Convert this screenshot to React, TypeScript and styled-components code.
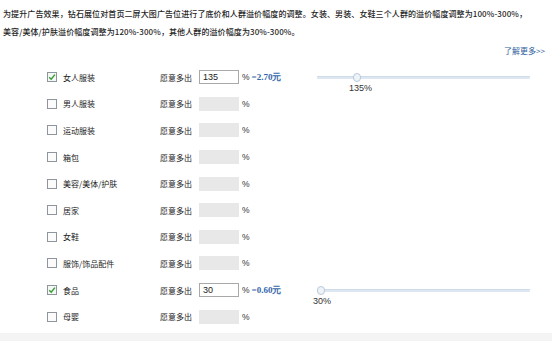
import styled, { createGlobalStyle } from 'styled-components';

const GlobalStyle = createGlobalStyle`
    html, body {
        margin: 0;
        padding: 0;
        background: #ffffff;
    }
    body {
        font-family: "Noto Sans CJK SC", "Liberation Sans", sans-serif;
        color: #333333;
    }
`;

const Page = styled.div`
    width: 552px;
    height: 341px;
    display: flex;
    flex-direction: column;
    overflow: hidden;
`;

const Intro = styled.p`
    margin: 0;
    padding: 5px 0 0 3px;
    font-size: 8px;
    line-height: 18px;
    font-weight: 500;
    letter-spacing: 0.1px;
    color: #1f1f1f;
`;

const MoreRow = styled.div`
    display: flex;
    justify-content: flex-end;
    height: 18px;
    align-items: center;
    padding-right: 7px;
    margin-bottom: 5px;
`;

const MoreLink = styled.a`
    font-size: 8px;
    color: #2f5f9e;
    text-decoration: none;
`;

const List = styled.div`
    display: flex;
    flex-direction: column;
`;

const Row = styled.div`
    display: flex;
    align-items: center;
    height: 26.6px;
    padding-left: 47px;
    font-size: 8px;
`;

const Box = styled.span<{ $checked: boolean }>`
    width: 10px;
    height: 10px;
    box-sizing: border-box;
    border: 1px solid #8e959c;
    background: ${(p) => (p.$checked ? '#f4f8f4' : '#fbfbfb')};
    display: flex;
    align-items: center;
    justify-content: center;
    margin-right: 6px;
    flex-shrink: 0;
`;

const Label = styled.span`
    width: 97px;
    white-space: nowrap;
    color: #222;
`;

const Prompt = styled.span`
    width: 39px;
    white-space: nowrap;
    color: #222;
`;

const Amount = styled.span<{ $filled: boolean }>`
    width: 40px;
    height: 14px;
    box-sizing: border-box;
    border: 1px solid ${(p) => (p.$filled ? '#a9a9a9' : '#e8e8e8')};
    background: ${(p) => (p.$filled ? '#ffffff' : '#e8e8e8')};
    font-family: "Liberation Sans", sans-serif;
    font-size: 9px;
    line-height: 12px;
    padding-left: 3px;
    color: #222;
`;

const Extra = styled.span`
    width: 78px;
    padding-left: 3px;
    box-sizing: border-box;
    white-space: nowrap;
    font-family: "Liberation Sans", sans-serif;
    font-size: 8.5px;
    color: #333;
`;

const Money = styled.span`
    color: #3567a8;
    font-family: "Liberation Serif", serif;
    font-weight: bold;
    font-size: 9px;
    margin-left: 2px;
`;

const Slider = styled.div`
    position: relative;
    width: 213px;
    height: 3px;
    background: #dce7f1;
    border-top: 1px solid #cfdbe8;
    box-sizing: border-box;
    border-radius: 1px;
`;

const Thumb = styled.span`
    position: absolute;
    top: -4px;
    width: 8px;
    height: 9px;
    box-sizing: border-box;
    border-radius: 4px;
    border: 1px solid #b9c9da;
    background: #eef3f8;
`;

const ThumbText = styled.span`
    position: absolute;
    top: 6px;
    font-family: "Liberation Sans", sans-serif;
    font-size: 9px;
    color: #333;
    white-space: nowrap;
`;

const Footer = styled.div`
    margin-top: auto;
    height: 8px;
    background: #f4f4f4;
`;

interface Category {
    name: string,
    value?: number,
    money?: string,
    min?: number
}

const categories: Category[] = [
    { name: '女人服装', value: 135, money: '2.70', min: 100 },
    { name: '男人服装' },
    { name: '运动服装' },
    { name: '箱包' },
    { name: '美容/美体/护肤' },
    { name: '居家' },
    { name: '女鞋' },
    { name: '服饰/饰品配件' },
    { name: '食品', value: 30, money: '0.60', min: 30 },
    { name: '母婴' },
];

function Check({ checked }: { checked: boolean }) {
    return (
        <Box $checked={checked}>
            {checked && (
                <svg width="8" height="8" viewBox="0 0 8 8">
                    <path d="M1.2 4.2 L3.2 6.2 L6.9 1.6" fill="none" stroke="#3b9a3b" strokeWidth="1.5" />
                </svg>
            )}
        </Box>
    );
}

function App() {
    const rows = categories.map((item) => {
        const filled = item.value !== undefined;
        const left = filled ? ((item.value! - item.min!) / (300 - item.min!)) * 205 : 0;

        return (
            <Row key={item.name}>
                <Check checked={filled} />
                <Label>{item.name}</Label>
                <Prompt>愿意多出</Prompt>
                <Amount $filled={filled}>{item.value}</Amount>
                <Extra>
                    %{filled && <Money>={item.money}元</Money>}
                </Extra>
                {filled && (
                    <Slider>
                        <Thumb style={{ left }} />
                        <ThumbText style={{ left: left - 4 }}>{item.value}%</ThumbText>
                    </Slider>
                )}
            </Row>
        );
    });

    return (
        <Page>
            <GlobalStyle />
            <Intro>
                为提升广告效果，钻石展位对首页二屏大图广告位进行了底价和人群溢价幅度的调整。女装、男装、女鞋三个人群的溢价幅度调整为100%-300%，
                <br />
                美容/美体/护肤溢价幅度调整为120%-300%，其他人群的溢价幅度为30%-300%。
            </Intro>
            <MoreRow>
                <MoreLink href="#">了解更多&gt;&gt;</MoreLink>
            </MoreRow>
            <List>{rows}</List>
            <Footer />
        </Page>
    );
}

export default App;
